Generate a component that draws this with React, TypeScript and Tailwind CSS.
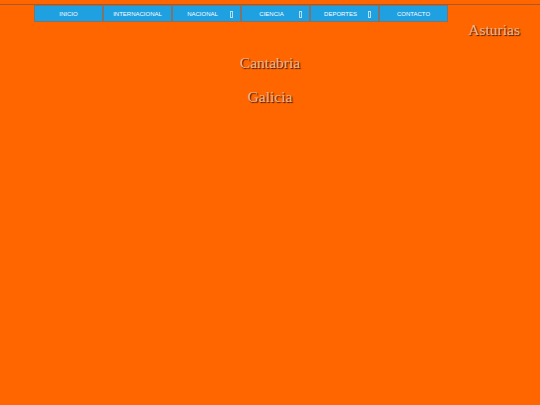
import React from "react";

const items = [
  { label: "INICIO", drop: false },
  { label: "INTERNACIONAL", drop: false },
  { label: "NACIONAL", drop: true },
  { label: "CIENCIA", drop: true },
  { label: "DEPORTES", drop: true },
  { label: "CONTACTO", drop: false },
];

export default function App() {
  return (
    <div className="w-[540px] h-[405px] bg-[#ff6600] overflow-hidden pt-[4px]">
      <div className="h-px w-full bg-[#a8582a]" />
      <nav className="flex pl-[34px] h-[17px]">
        {items.map((it) => (
          <div
            key={it.label}
            className="relative w-[69px] h-[17px] bg-[#1fa0e0] border border-[#7e746e] flex items-center justify-center"
            style={{ fontFamily: '"Liberation Sans", Arial, sans-serif' }}
          >
            <span className={`text-[6px] text-white leading-none ${it.drop ? "pr-[8px]" : ""}`}>
              {it.label}
            </span>
            {it.drop && (
              <span className="absolute right-[7px] top-[5px] w-[3px] h-[7px] border border-[#b8def2]" />
            )}
          </div>
        ))}
      </nav>
      <div
        className="-mt-px text-[15.5px] leading-[17px] text-[#e8b890] [text-shadow:1px_1px_1px_#3a1500]"
        style={{ fontFamily: '"Liberation Serif", "Times New Roman", serif' }}
      >
        <div className="text-right pr-[20px]">Asturias</div>
        <div className="text-center mt-[16px]">Cantabria</div>
        <div className="text-center mt-[17px]">Galicia</div>
      </div>
    </div>
  );
}
